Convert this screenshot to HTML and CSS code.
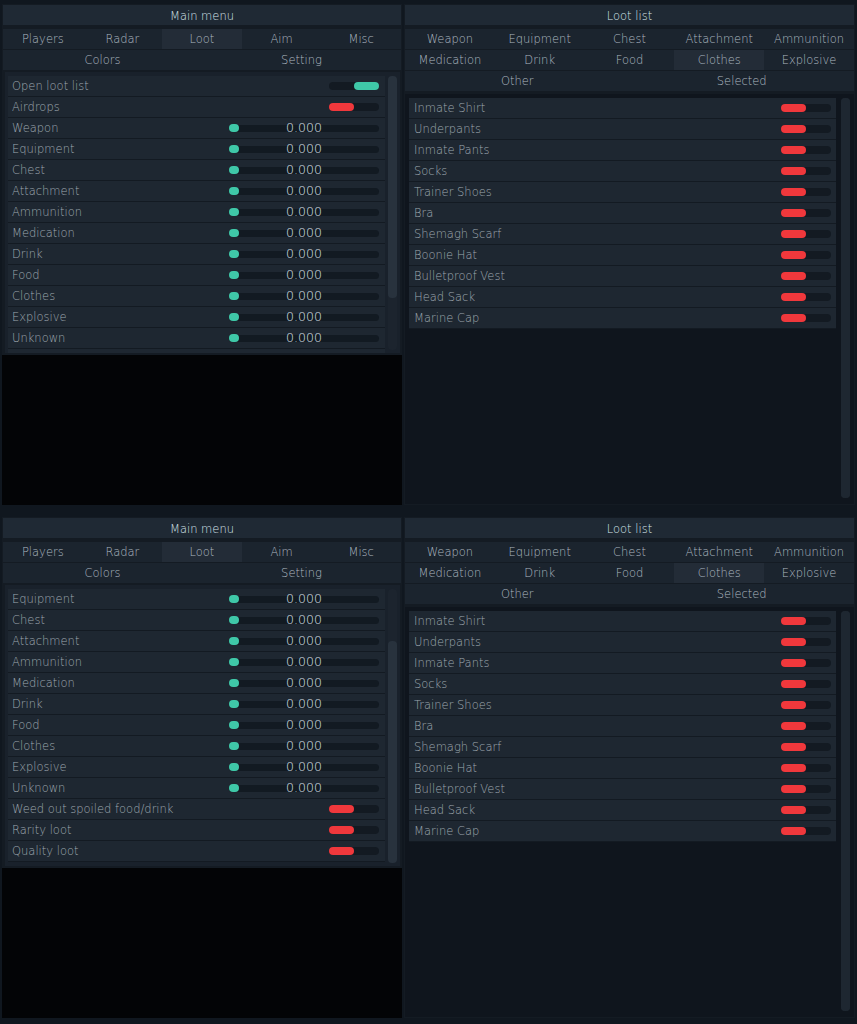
FILE: index.html
```html
<!DOCTYPE html>
<html>
<head>
<meta charset="utf-8">
<link rel="stylesheet" href="styles.css">
</head>
<body>
<div class="screen">
  <div class="leftcol">
    <div class="panel main">
      <div class="title">Main menu</div>
      <div class="tabs t5"><div class="tab">Players</div><div class="tab">Radar</div><div class="tab on">Loot</div><div class="tab">Aim</div><div class="tab">Misc</div></div>
      <div class="tabs t2"><div class="tab">Colors</div><div class="tab">Setting</div></div>
      <div class="frame">
        <div class="view">
          <div class="list">
            <div class="row"><span class="lbl">Open loot list</span><div class="toggle on"><i></i></div></div>
            <div class="row"><span class="lbl">Airdrops</span><div class="toggle"><i></i></div></div>
            <div class="row"><span class="lbl">Weapon</span><div class="slider"><span class="knob"></span><span class="val">0.000</span></div></div>
            <div class="row"><span class="lbl">Equipment</span><div class="slider"><span class="knob"></span><span class="val">0.000</span></div></div>
            <div class="row"><span class="lbl">Chest</span><div class="slider"><span class="knob"></span><span class="val">0.000</span></div></div>
            <div class="row"><span class="lbl">Attachment</span><div class="slider"><span class="knob"></span><span class="val">0.000</span></div></div>
            <div class="row"><span class="lbl">Ammunition</span><div class="slider"><span class="knob"></span><span class="val">0.000</span></div></div>
            <div class="row"><span class="lbl">Medication</span><div class="slider"><span class="knob"></span><span class="val">0.000</span></div></div>
            <div class="row"><span class="lbl">Drink</span><div class="slider"><span class="knob"></span><span class="val">0.000</span></div></div>
            <div class="row"><span class="lbl">Food</span><div class="slider"><span class="knob"></span><span class="val">0.000</span></div></div>
            <div class="row"><span class="lbl">Clothes</span><div class="slider"><span class="knob"></span><span class="val">0.000</span></div></div>
            <div class="row"><span class="lbl">Explosive</span><div class="slider"><span class="knob"></span><span class="val">0.000</span></div></div>
            <div class="row"><span class="lbl">Unknown</span><div class="slider"><span class="knob"></span><span class="val">0.000</span></div></div>
            <div class="row"></div>
          </div>
        </div>
        <div class="sb"><div class="thumb"></div></div>
      </div>
    </div>
  </div>
  <div class="panel loot">
    <div class="title">Loot list</div>
    <div class="tabs t5"><div class="tab">Weapon</div><div class="tab">Equipment</div><div class="tab">Chest</div><div class="tab">Attachment</div><div class="tab">Ammunition</div></div>
    <div class="tabs t5"><div class="tab">Medication</div><div class="tab">Drink</div><div class="tab">Food</div><div class="tab on">Clothes</div><div class="tab">Explosive</div></div>
    <div class="tabs t2"><div class="tab">Other</div><div class="tab">Selected</div></div>
    <div class="frame">
      <div class="view">
        <div class="list">
          <div class="row"><span class="lbl">Inmate Shirt</span><div class="toggle"><i></i></div></div>
          <div class="row"><span class="lbl">Underpants</span><div class="toggle"><i></i></div></div>
          <div class="row"><span class="lbl">Inmate Pants</span><div class="toggle"><i></i></div></div>
          <div class="row"><span class="lbl">Socks</span><div class="toggle"><i></i></div></div>
          <div class="row"><span class="lbl">Trainer Shoes</span><div class="toggle"><i></i></div></div>
          <div class="row"><span class="lbl">Bra</span><div class="toggle"><i></i></div></div>
          <div class="row"><span class="lbl">Shemagh Scarf</span><div class="toggle"><i></i></div></div>
          <div class="row"><span class="lbl">Boonie Hat</span><div class="toggle"><i></i></div></div>
          <div class="row"><span class="lbl">Bulletproof Vest</span><div class="toggle"><i></i></div></div>
          <div class="row"><span class="lbl">Head Sack</span><div class="toggle"><i></i></div></div>
          <div class="row"><span class="lbl">Marine Cap</span><div class="toggle"><i></i></div></div>
        </div>
      </div>
      <div class="sb"><div class="thumb"></div></div>
    </div>
  </div>
</div>

<div class="screen second">
  <div class="leftcol">
    <div class="panel main">
      <div class="title">Main menu</div>
      <div class="tabs t5"><div class="tab">Players</div><div class="tab">Radar</div><div class="tab on">Loot</div><div class="tab">Aim</div><div class="tab">Misc</div></div>
      <div class="tabs t2"><div class="tab">Colors</div><div class="tab">Setting</div></div>
      <div class="frame">
        <div class="view">
          <div class="list">
            <div class="row"><span class="lbl">Equipment</span><div class="slider"><span class="knob"></span><span class="val">0.000</span></div></div>
            <div class="row"><span class="lbl">Chest</span><div class="slider"><span class="knob"></span><span class="val">0.000</span></div></div>
            <div class="row"><span class="lbl">Attachment</span><div class="slider"><span class="knob"></span><span class="val">0.000</span></div></div>
            <div class="row"><span class="lbl">Ammunition</span><div class="slider"><span class="knob"></span><span class="val">0.000</span></div></div>
            <div class="row"><span class="lbl">Medication</span><div class="slider"><span class="knob"></span><span class="val">0.000</span></div></div>
            <div class="row"><span class="lbl">Drink</span><div class="slider"><span class="knob"></span><span class="val">0.000</span></div></div>
            <div class="row"><span class="lbl">Food</span><div class="slider"><span class="knob"></span><span class="val">0.000</span></div></div>
            <div class="row"><span class="lbl">Clothes</span><div class="slider"><span class="knob"></span><span class="val">0.000</span></div></div>
            <div class="row"><span class="lbl">Explosive</span><div class="slider"><span class="knob"></span><span class="val">0.000</span></div></div>
            <div class="row"><span class="lbl">Unknown</span><div class="slider"><span class="knob"></span><span class="val">0.000</span></div></div>
            <div class="row"><span class="lbl">Weed out spoiled food/drink</span><div class="toggle"><i></i></div></div>
            <div class="row"><span class="lbl">Rarity loot</span><div class="toggle"><i></i></div></div>
            <div class="row"><span class="lbl">Quality loot</span><div class="toggle"><i></i></div></div>
          </div>
        </div>
        <div class="sb"><div class="thumb end"></div></div>
      </div>
    </div>
  </div>
  <div class="panel loot">
    <div class="title">Loot list</div>
    <div class="tabs t5"><div class="tab">Weapon</div><div class="tab">Equipment</div><div class="tab">Chest</div><div class="tab">Attachment</div><div class="tab">Ammunition</div></div>
    <div class="tabs t5"><div class="tab">Medication</div><div class="tab">Drink</div><div class="tab">Food</div><div class="tab on">Clothes</div><div class="tab">Explosive</div></div>
    <div class="tabs t2"><div class="tab">Other</div><div class="tab">Selected</div></div>
    <div class="frame">
      <div class="view">
        <div class="list">
          <div class="row"><span class="lbl">Inmate Shirt</span><div class="toggle"><i></i></div></div>
          <div class="row"><span class="lbl">Underpants</span><div class="toggle"><i></i></div></div>
          <div class="row"><span class="lbl">Inmate Pants</span><div class="toggle"><i></i></div></div>
          <div class="row"><span class="lbl">Socks</span><div class="toggle"><i></i></div></div>
          <div class="row"><span class="lbl">Trainer Shoes</span><div class="toggle"><i></i></div></div>
          <div class="row"><span class="lbl">Bra</span><div class="toggle"><i></i></div></div>
          <div class="row"><span class="lbl">Shemagh Scarf</span><div class="toggle"><i></i></div></div>
          <div class="row"><span class="lbl">Boonie Hat</span><div class="toggle"><i></i></div></div>
          <div class="row"><span class="lbl">Bulletproof Vest</span><div class="toggle"><i></i></div></div>
          <div class="row"><span class="lbl">Head Sack</span><div class="toggle"><i></i></div></div>
          <div class="row"><span class="lbl">Marine Cap</span><div class="toggle"><i></i></div></div>
        </div>
      </div>
      <div class="sb"><div class="thumb"></div></div>
    </div>
  </div>
</div>
</body>
</html>
```

FILE: styles.css
```css
html, body {
  margin: 0;
  padding: 0;
  background: #10171f;
}
body {
  width: 857px;
  font-family: "DejaVu Sans", "Liberation Sans", sans-serif;
  font-size: 11.5px;
  font-weight: 300;
}
.screen {
  height: 513px;
  box-sizing: border-box;
  padding-top: 4px;
  display: flex;
  align-items: flex-start;
}
.screen.second {
  height: 511px;
}
.leftcol {
  margin-left: 2px;
  width: 400px;
  height: 501px;
  background: #030406;
}
.panel {
  background: #141b23;
  box-sizing: border-box;
  padding: 1px;
  display: flex;
  flex-direction: column;
}
.main {
  width: 400px;
  height: 351px;
}
.loot {
  margin-left: 2px;
  width: 451px;
  height: 501px;
}
.title {
  height: 20px;
  line-height: 22px;
  overflow: hidden;
  text-align: center;
  color: #d6e3ea;
  background: #1f2934;
  margin-bottom: 4px;
}
.tabs {
  display: grid;
  height: 20px;
  margin-bottom: 1px;
}
.t5 { grid-template-columns: repeat(5, 1fr); }
.t2 { grid-template-columns: 1fr 1fr; }
.tab {
  background: #1b242e;
  color: #adb8c0;
  text-align: center;
  line-height: 21px;
  height: 20px;
  overflow: hidden;
  white-space: nowrap;
}
.tab.on {
  background: #232c37;
}
.frame {
  flex: 1;
  display: flex;
  min-height: 0;
}
.main .frame {
  margin: 1px 1px 1px 2px;
  padding: 0 3px;
  background: #19212b;
}
.loot .frame {
  margin: 2px 0 0;
  padding: 0 4px;
  background: #0f151d;
}
.view {
  overflow: hidden;
  padding-top: 4px;
}
.main .view { width: 377px; }
.loot .view { width: 427px; }
.row {
  height: 20px;
  border-bottom: 1px solid #131a22;
  background: #1e2731;
  display: flex;
  align-items: center;
  padding-left: 4px;
  color: #9ea8b0;
}
.loot .row { padding-left: 5px; }
.lbl {
  flex: 1;
  white-space: nowrap;
}
.slider {
  position: relative;
  width: 150px;
  height: 7px;
  border-radius: 4px;
  background: #121a22;
  margin-right: 6px;
}
.knob {
  position: absolute;
  left: 0;
  top: -1px;
  width: 10px;
  height: 8px;
  border-radius: 4px;
  background: #3fc8a8;
}
.val {
  position: absolute;
  left: 0;
  right: 0;
  top: -5px;
  text-align: center;
  color: #d9e1e6;
  font-size: 12.5px;
  line-height: 16px;
}
.toggle {
  width: 50px;
  height: 8px;
  border-radius: 4px;
  background: #131a22;
  margin-right: 6px;
  display: flex;
}
.toggle.on { justify-content: flex-end; }
.toggle i {
  width: 25px;
  border-radius: 4px;
  background: #f0383c;
}
.toggle.on i { background: #3fc8a8; }
.loot .toggle { margin-right: 5px; }
.sb {
  width: 9px;
  border-radius: 4px;
  background: #1c242e;
  margin: 4px 0 3px 3px;
  display: flex;
  flex-direction: column;
}
.loot .sb {
  margin: 4px 0 6px 5px;
}
.thumb {
  height: 222px;
  border-radius: 4px;
  background: #28323d;
}
.thumb.end { margin-top: auto; }
.loot .thumb {
  flex: 1;
  background: #1e2731;
}
```
